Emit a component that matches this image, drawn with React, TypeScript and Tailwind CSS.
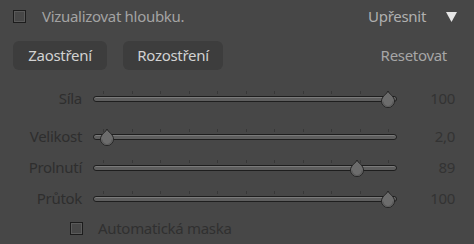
import React from 'react';

const rows = [
  { label: 'Síla', value: '100', pos: 1 },
  { label: 'Velikost', value: '2,0', pos: 0.015 },
  { label: 'Prolnutí', value: '89', pos: 0.89 },
  { label: 'Průtok', value: '100', pos: 1 },
];

function Checkbox() {
  return (
    <span className="block h-[13px] w-[13px] border border-[#1c1c1c] bg-[#474747] shadow-[inset_0_0_0_1px_#5a5a5a]" />
  );
}

function Thumb() {
  return (
    <svg width="16" height="18" viewBox="0 0 16 18" className="block">
      <path
        d="M8 1 C9 4 14.5 6.5 14.5 11 A6.5 6.5 0 0 1 1.5 11 C1.5 6.5 7 4 8 1 Z"
        fill="#6c6c6c"
        stroke="#242424"
        strokeWidth="1"
      />
      <path d="M3 11.5 A5 5 0 0 0 13 11.5" fill="none" stroke="#5b5b5b" strokeWidth="1.2" />
    </svg>
  );
}

function Slider({ pos }: { pos: number }) {
  const left = 10 + pos * 285;
  return (
    <div className="relative h-full w-[304px]">
      {/* tick marks */}
      <div className="absolute left-0 top-[8px] h-[3px] w-full">
        {Array.from({ length: 11 }).map((_, i) => (
          <span
            key={i}
            className="absolute top-0 h-[3px] w-px bg-[#383838]"
            style={{ left: 10 + i * 28.5 }}
          />
        ))}
      </div>
      <div className="absolute left-0 top-[13px] h-[6px] w-full rounded-[3px] border border-[#1e1e1e] bg-[#5e5e5e] shadow-[inset_0_1px_0_#7a7a7a]" />
      <div className="absolute top-[7px]" style={{ left: left - 8 }}>
        <Thumb />
      </div>
    </div>
  );
}

export default function App() {
  return (
    <div
      className="w-[474px] h-[244px] bg-[#474747] overflow-hidden text-[15px] tracking-[-0.3px]"
      style={{ fontFamily: '"Noto Sans", "Open Sans", sans-serif' }}
    >
      {/* top row */}
      <div className="flex h-[32px] items-center pl-[13px] pr-[16px]">
        <Checkbox />
        <span className="ml-[16px] text-[#a3a3a3]">Vizualizovat hloubku.</span>
        <span className="ml-auto text-[#b0b0b0]">Upřesnit</span>
        <svg width="13" height="13" viewBox="0 0 13 13" className="ml-[19px]">
          <path d="M1 2 H12 L6.5 12 Z" fill="#e6e6e6" />
        </svg>
      </div>

      {/* buttons */}
      <div className="mt-[9px] flex items-center pl-[13px] pr-[27px]">
        <button className="h-[29px] w-[94px] rounded-[6px] bg-[#3d3d3d] text-[#d2d2d2]">
          Zaostření
        </button>
        <button className="ml-[16px] h-[29px] w-[100px] rounded-[6px] bg-[#3d3d3d] text-[#d2d2d2]">
          Rozostření
        </button>
        <span className="ml-auto text-[#a6a6a6]">Resetovat</span>
      </div>

      {/* sliders */}
      <div className="mt-[13px] flex flex-col">
        {rows.map((r, i) => (
          <div key={r.label} className={`flex h-[30px] items-center ${i === 1 ? 'mt-[8px]' : ''} ${i > 1 ? 'mt-px' : ''}`}>
            <span className="w-[82px] text-right text-[#2e2e2e]">{r.label}</span>
            <div className="ml-[11px] h-full">
              <Slider pos={r.pos} />
            </div>
            <span className="w-[58px] text-right text-[#333333]">{r.value}</span>
          </div>
        ))}
      </div>

      {/* auto mask */}
      <div className="flex h-[30px] items-center pl-[70px]">
        <Checkbox />
        <span className="ml-[15px] text-[#303030]">Automatická maska</span>
      </div>
    </div>
  );
}
